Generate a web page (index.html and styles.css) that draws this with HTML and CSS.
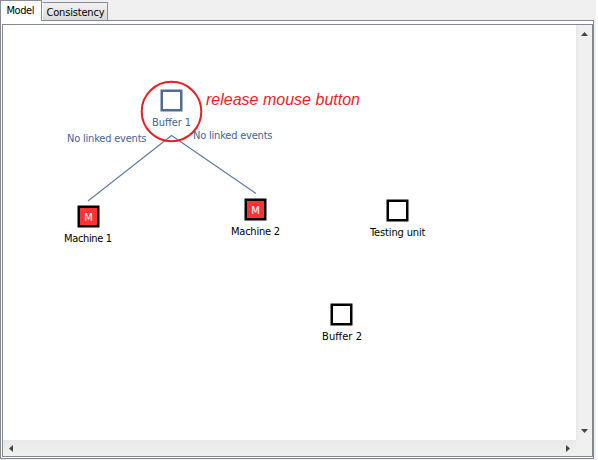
FILE: index.html
```html
<!DOCTYPE html>
<html lang="en">
<head>
<meta charset="utf-8">
<title>Model</title>
<link rel="stylesheet" href="styles.css">
</head>
<body>
<div class="window">
  <nav class="tabs">
    <div class="tab active"><svg width="40" height="18"><text x="5.500" y="13" textLength="28">Model</text></svg></div>
    <div class="tab"><svg width="64" height="17"><text x="3.500" y="13" textLength="58">Consistency</text></svg></div>
  </nav>
  <main class="panel">
    <div class="view">
      <svg class="canvas" viewBox="3 25 573 415" width="573" height="415">
        <g class="link">
          <path d="M88 201 171.500 135.500 256 193.500"/>
          <text x="67" y="142" textLength="79.500">No linked events</text>
          <text x="193" y="139" textLength="79.500">No linked events</text>
        </g>
        <g class="node selected">
          <rect x="161.750" y="90.750" width="19.500" height="19.500"/>
          <text x="152" y="126" textLength="39">Buffer 1</text>
        </g>
        <g class="node machine">
          <rect x="78.750" y="206.750" width="19.500" height="19.500"/>
          <text class="letter" x="88.500" y="221">M</text>
          <text x="64" y="242" textLength="48">Machine 1</text>
        </g>
        <g class="node machine">
          <rect x="245.750" y="199.750" width="19.500" height="19.500"/>
          <text class="letter" x="255.500" y="214">M</text>
          <text x="231" y="235" textLength="49">Machine 2</text>
        </g>
        <g class="node">
          <rect x="387.750" y="200.750" width="19.500" height="19.500"/>
          <text x="370" y="236" textLength="55.500">Testing unit</text>
        </g>
        <g class="node">
          <rect x="331.750" y="304.750" width="19.500" height="19.500"/>
          <text x="322" y="340" textLength="40">Buffer 2</text>
        </g>
        <circle class="ring" cx="171.500" cy="111.500" r="29.800"/>
        <text class="note" x="206" y="105" textLength="154">release mouse button</text>
      </svg>
      <div class="bar vertical">
        <svg width="7" height="4"><path d="M0 4 3.500 0 7 4z"/></svg>
        <svg width="7" height="4"><path d="M0 0H7L3.500 4z"/></svg>
      </div>
      <div class="bar horizontal">
        <svg width="4" height="7"><path d="M4 0V7L0 3.500z"/></svg>
        <svg width="4" height="7"><path d="M0 0V7L4 3.500z"/></svg>
      </div>
      <div class="corner"></div>
    </div>
  </main>
</div>
</body>
</html>
```
FILE: styles.css
```css
* { box-sizing: border-box; }
body {
  margin: 0;
  background: #fff;
  font: 11px "DejaVu Sans Condensed", "DejaVu Sans", sans-serif;
}
svg { display: block; }
.window {
  width: 596px;
  height: 460px;
  background: #f0f0f0;
}
.tabs {
  display: flex;
  align-items: flex-end;
  height: 20px;
}
.tab {
  height: 18px;
  border: 1px solid #898c95;
  border-left-color: #fff;
  border-bottom: 0;
  background: linear-gradient(#f2f2f2, #dadada);
}
.tab.active {
  position: relative;
  height: 20px;
  width: 42px;
  margin-bottom: -1px;
  border-left-color: #898c95;
  background: #fff;
  height: 21px;
}
.panel {
  width: 594px;
  height: 439px;
  padding: 3px 0 1px 1px;
  border: 1px solid #828790;
  background: #fff;
}
.view {
  display: grid;
  grid-template: 415px 16px / 573px 16px;
  width: 591px;
  height: 433px;
  border: 1px solid #828790;
}
.canvas { background: #fff; }
.bar {
  display: flex;
  align-items: center;
  justify-content: space-between;
}
.vertical {
  flex-direction: column;
  padding: 7px 0;
  background: linear-gradient(90deg, #e8e8e8, #f0f0f0 30%);
}
.horizontal {
  padding: 0 6px;
  background: linear-gradient(#e8e8e8, #f0f0f0);
}
.bar path { fill: #444; }
.corner { background: #f0f0f0; }
.link path {
  fill: none;
  stroke: #5c7aa3;
  stroke-width: 1.1;
}
.link text, .selected text { fill: #46648f; }
.node rect {
  fill: #fff;
  stroke: #000;
  stroke-width: 2.5;
}
.node.selected rect { stroke: #4f6c96; }
.machine rect { fill: #ff3333; }
.node .letter {
  fill: #fff;
  text-anchor: middle;
}
.ring {
  fill: none;
  stroke: #ed1c24;
  stroke-width: 2;
}
.note {
  fill: #ed1c24;
  font: italic 16px "Liberation Sans", sans-serif;
}
```
